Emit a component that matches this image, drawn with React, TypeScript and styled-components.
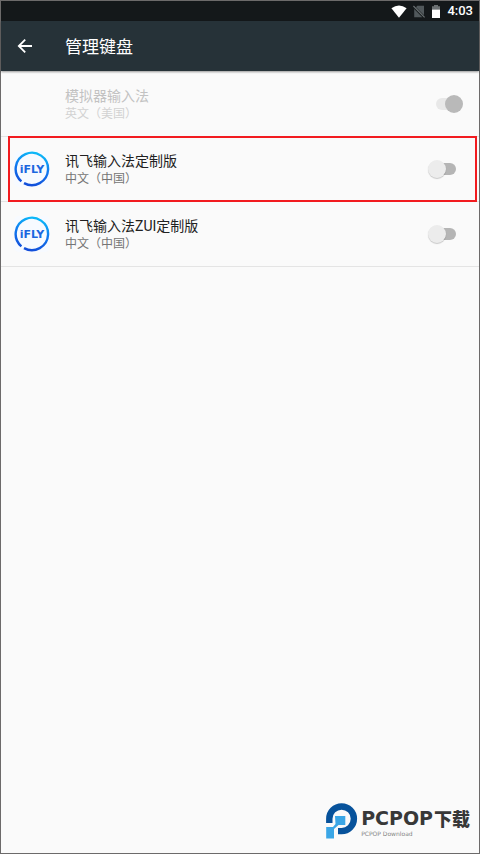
import React, { useState } from 'react';
import styled, { createGlobalStyle } from 'styled-components';

const GlobalStyle = createGlobalStyle`
  *, *::before, *::after { box-sizing: border-box; }
  body {
    margin: 0;
    background: #fafafa;
    font-family: Roboto, "Noto Sans CJK SC", sans-serif;
  }
`;

const Page = styled.div`
  display: flex;
  flex-direction: column;
  min-height: 100vh;
  border: 1px solid #6c6a6a;
  background: #fafafa;
`;

const StatusBar = styled.div`
  display: flex;
  align-items: center;
  justify-content: flex-end;
  height: 20px;
  padding: 0 6px 0 8px;
  background: #14181a;
  color: #fff;
`;

const StatusIcon = styled.svg`
  display: block;
  flex: none;
  margin-right: 6px;
`;

const Clock = styled.time`
  font-size: 13px;
  font-weight: 500;
  line-height: 20px;
`;

const AppBar = styled.header`
  display: flex;
  align-items: center;
  height: 50px;
  padding-left: 12px;
  background: #263238;
  color: #fff;
  box-shadow: 0 1px 2px rgba(0, 0, 0, 0.4);
`;

const BackButton = styled.button`
  display: flex;
  align-items: center;
  justify-content: center;
  width: 24px;
  height: 24px;
  margin: 0;
  padding: 0;
  border: 0;
  background: none;
  color: inherit;
  cursor: pointer;
`;

const Title = styled.h1`
  margin: 0 0 0 28px;
  padding-top: 2px;
  font-size: 17px;
  font-weight: 400;
  line-height: 24px;
`;

const List = styled.ul`
  margin: 0;
  padding: 1px 0 0;
  list-style: none;
`;

const Row = styled.li`
  position: relative;
  height: 65px;
  border-bottom: 1px solid #e4e4e4;
`;

const RowLabel = styled.label`
  display: grid;
  grid-template-columns: 36px 1fr 35px;
  align-items: center;
  column-gap: 15px;
  height: 100%;
  padding: 0 16px 0 13px;
`;

const Names = styled.span<{ $muted?: boolean }>`
  display: flex;
  flex-direction: column;
  padding-top: 2px;
  color: ${p => (p.$muted ? '#c2c2c2' : '#212121')};
  small {
    color: ${p => (p.$muted ? '#d2d2d2' : '#757575')};
  }
`;

const Name = styled.span`
  font-size: 14px;
  line-height: 18px;
`;

const Language = styled.small`
  font-size: 12px;
  line-height: 18px;
`;

const Highlight = styled.span`
  position: absolute;
  inset: -1px 2px -1px 7px;
  z-index: 1;
  border: 2px solid #f21b1f;
  pointer-events: none;
`;

const Switch = styled.input`
  appearance: none;
  display: grid;
  align-items: center;
  width: 35px;
  height: 18px;
  margin: 0;
  &::before,
  &::after {
    content: '';
    grid-area: 1 / 1;
  }
  &::before {
    justify-self: center;
    width: 20px;
    height: 12px;
    border-radius: 6px;
    background: #b5b5b5;
  }
  &::after {
    justify-self: start;
    width: 18px;
    height: 18px;
    border-radius: 50%;
    background: #ececec;
    box-shadow: 0 1px 1px rgba(0, 0, 0, 0.2);
  }
  &:checked::before {
    background: #e8e8e8;
  }
  &:checked::after {
    justify-self: end;
    background: #b9b9b9;
    box-shadow: none;
  }
`;

const Footer = styled.footer`
  display: flex;
  align-items: flex-end;
  justify-content: flex-end;
  gap: 3px;
  margin-top: auto;
  padding: 0 9px 14px;
`;

const Brand = styled.div`
  display: flex;
  flex-direction: column;
`;

const BrandName = styled.strong`
  display: flex;
  align-items: center;
  color: #383838;
  font-family: "DejaVu Sans", sans-serif;
  font-size: 19px;
  font-weight: 700;
  line-height: 22px;
`;

const BrandSuffix = styled.span`
  margin-left: 1px;
  font-family: "Noto Sans CJK SC", sans-serif;
  font-size: 18px;
  font-weight: 900;
`;

const BrandNote = styled.span`
  color: #858585;
  font-family: "DejaVu Sans", sans-serif;
  font-size: 6px;
  line-height: 10px;
`;

function FlyLogo({ id }: { id: string }) {
  return (
    <svg width="36" height="36" viewBox="0 0 36 36" aria-hidden="true">
      <defs>
        <linearGradient id={id} x1="22" y1="1" x2="14" y2="35" gradientUnits="userSpaceOnUse">
          <stop offset="0" stopColor="#0cbcf8" />
          <stop offset="0.45" stopColor="#107cf0" />
          <stop offset="1" stopColor="#124bd8" />
        </linearGradient>
      </defs>
      <rect width="36" height="36" rx="5" fill="#f7faff" />
      <path
        d="M10 32.1 A16.2 16.2 0 1 0 7.4 30.3"
        fill="none"
        stroke={`url(#${id})`}
        strokeWidth="2.4"
      />
      <text
        x="18"
        y="22"
        textAnchor="middle"
        fontFamily="DejaVu Sans, sans-serif"
        fontSize="11"
        fontWeight="700"
        fill="#1b67df"
      >
        iFLY
      </text>
    </svg>
  );
}

interface Keyboard {
  id: string;
  name: string;
  language: string;
  enabled: boolean;
  locked?: boolean;
  highlighted?: boolean;
}

const keyboards: Keyboard[] = [
  { id: 'emulator', name: '模拟器输入法', language: '英文（美国）', enabled: true, locked: true },
  { id: 'ifly', name: '讯飞输入法定制版', language: '中文（中国）', enabled: false, highlighted: true },
  { id: 'ifly-zui', name: '讯飞输入法ZUI定制版', language: '中文（中国）', enabled: false },
];

function KeyboardRow({ item }: { item: Keyboard }) {
  const [on, setOn] = useState(item.enabled);
  return (
    <Row>
      <RowLabel htmlFor={item.id}>
        {item.locked ? <span /> : <FlyLogo id={`${item.id}-gradient`} />}
        <Names $muted={item.locked}>
          <Name>{item.name}</Name>
          <Language>{item.language}</Language>
        </Names>
        <Switch
          id={item.id}
          type="checkbox"
          role="switch"
          checked={on}
          disabled={item.locked}
          onChange={e => setOn(e.target.checked)}
        />
      </RowLabel>
      {item.highlighted && <Highlight />}
    </Row>
  );
}

export default function App() {
  return (
    <>
      <GlobalStyle />
      <Page lang="zh-CN">
        <StatusBar>
          <StatusIcon width="16" height="13" viewBox="0 0 16 13" aria-hidden="true">
            <path d="M0.4 3.3 Q8 -2.3 15.6 3.3 L8 12.8Z" fill="#fff" />
          </StatusIcon>
          <StatusIcon width="12" height="13" viewBox="0 0 12 13" aria-hidden="true">
            <path d="M4.3 0.8 H11 V10.2 L3 2.2Z M1.2 4.1 L9.3 12.2 H1.2Z" fill="#51585b" />
            <path d="M0.4 1 L11.6 12.4" stroke="#6b7173" strokeWidth="1.2" />
          </StatusIcon>
          <StatusIcon width="10" height="13" viewBox="1 0 10 13" aria-hidden="true">
            <path d="M4 0 H8 V1.3 H10 V4.5 H2 V1.3 H4Z" fill="#6b7072" />
            <path d="M2 4.5 H10 V13 H2Z" fill="#fff" />
          </StatusIcon>
          <Clock>4:03</Clock>
        </StatusBar>
        <AppBar>
          <BackButton type="button" aria-label="返回">
            <svg width="16" height="16" viewBox="0 0 16 16" fill="none" stroke="currentColor" strokeWidth="1.8" aria-hidden="true">
              <path d="M15 8 H2 M8.2 1.6 L1.8 8 L8.2 14.4" />
            </svg>
          </BackButton>
          <Title>管理键盘</Title>
        </AppBar>
        <List>
          {keyboards.map(item => (
            <KeyboardRow key={item.id} item={item} />
          ))}
        </List>
        <Footer>
          <svg width="32" height="36" viewBox="0 0 32 36" aria-hidden="true">
            <path
              d="M3.3 20 V15.8 A12.3 12.3 0 1 1 15.6 28.1 H12"
              fill="none"
              stroke="#07529b"
              strokeWidth="6.4"
            />
            <path d="M9 13 H19.3 V22 H12.5 L8 26 V35.4 H0.2 V24 H7 L9.5 21Z" fill="#3aa6e6" />
          </svg>
          <Brand>
            <BrandName>
              PCPOP<BrandSuffix>下载</BrandSuffix>
            </BrandName>
            <BrandNote>PCPOP Download</BrandNote>
          </Brand>
        </Footer>
      </Page>
    </>
  );
}
